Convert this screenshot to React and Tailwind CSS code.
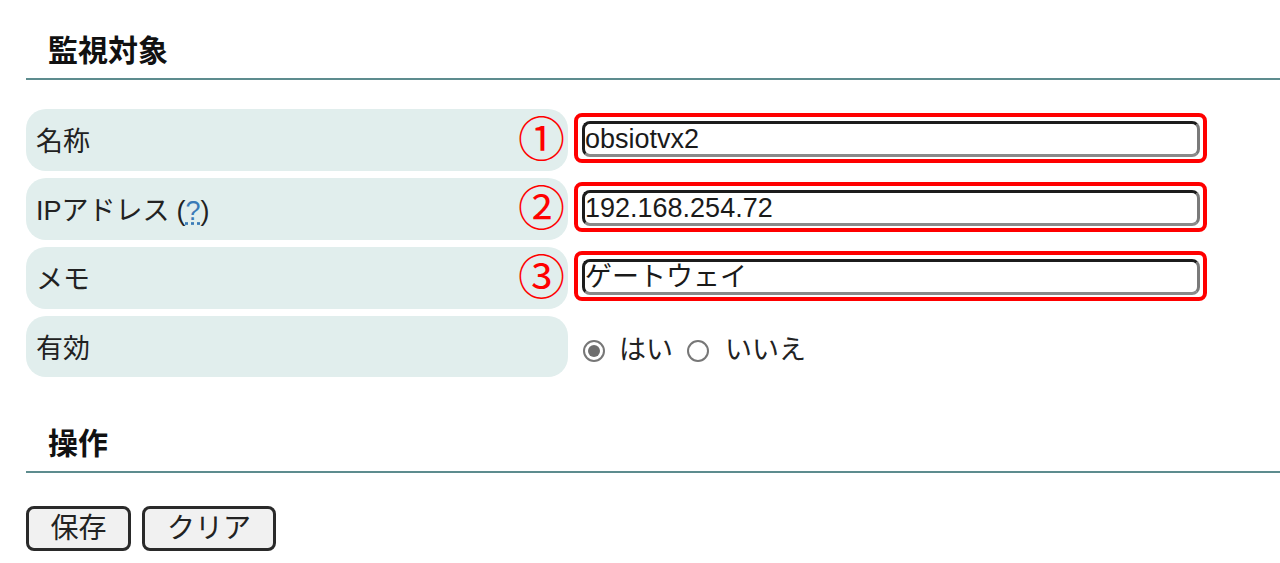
import React, { useState } from "react";

const font = "font-['Liberation_Sans','Noto_Sans_CJK_JP',sans-serif]";

const Field = ({ label, mark, value, help }) => (
  <div className="flex h-[62px]">
    <div className="flex w-[542px] shrink-0 items-center rounded-[20px] bg-[#e1eeed] pl-[10px] pt-[5px] text-[27px] text-[#222]">
      {label}
      {help && (
        <span className="ml-[7px]">
          (<span className="text-[#3a7bb7] underline decoration-dotted">?</span>)
        </span>
      )}
    </div>
    <div className="relative flex items-start pl-[6px] pt-[4px]">
      <span className="absolute left-[-50px] top-[7px] text-[47px] leading-none text-[#ff0000]">{mark}</span>
      <div className="h-[50px] w-[633px] rounded-[8px] border-4 border-[#ff0000] bg-white pb-[2px] pl-[4px] pr-[3px] pt-[4px]">
        <input
          readOnly
          value={value}
          className="h-[36px] w-full rounded-[8px] border-[3px] border-[#1c1c1c] border-b-[#8a8a8a] border-r-[#7a7a7a] bg-white px-0 text-[27px] text-[#1a1a1a] outline-none"
        />
      </div>
    </div>
  </div>
);

const Heading = ({ children }) => (
  <div className="border-b-2 border-[#5d8c8e] pb-[12px] pl-[22px] text-[30px] font-bold leading-none text-[#111]">
    {children}
  </div>
);

export default function App() {
  const [enabled, setEnabled] = useState(true);
  return (
    <div className={`${font} min-h-[563px] bg-white pl-[26px] pt-[36px]`}>
      <Heading>監視対象</Heading>
      <div className="mt-[29px] flex flex-col gap-[7px]">
        <Field label="名称" mark="①" value="obsiotvx2" />
        <Field label="IPアドレス" help mark="②" value="192.168.254.72" />
        <Field label="メモ" mark="③" value="ゲートウェイ" />
        <div className="flex h-[61px]">
          <div className="flex w-[542px] shrink-0 items-center rounded-[20px] bg-[#e1eeed] pl-[10px] pt-[5px] text-[27px] text-[#222]">
            有効
          </div>
          <div className="flex items-center pl-[15px] pt-[8px] text-[27px] text-[#222]">
            <span
              onClick={() => setEnabled(true)}
              className="flex h-[22px] w-[22px] items-center justify-center rounded-full border-2 border-[#777] bg-white"
            >
              {enabled && <span className="h-[12px] w-[12px] rounded-full bg-[#6e6e6e]" />}
            </span>
            <span className="ml-[14px]">はい</span>
            <span
              onClick={() => setEnabled(false)}
              className="ml-[14px] flex h-[22px] w-[22px] items-center justify-center rounded-full border-2 border-[#777] bg-white"
            >
              {!enabled && <span className="h-[12px] w-[12px] rounded-full bg-[#6e6e6e]" />}
            </span>
            <span className="ml-[16px]">いいえ</span>
          </div>
        </div>
      </div>
      <div className="mt-[52px]">
        <Heading>操作</Heading>
      </div>
      <div className="mt-[33px] flex gap-[11px]">
        <button className="h-[45px] w-[105px] rounded-[8px] border-[3px] border-[#2a2a2a] bg-[#f1f1f1] text-[28px] leading-none text-[#222]">
          保存
        </button>
        <button className="h-[45px] w-[134px] rounded-[8px] border-[3px] border-[#2a2a2a] bg-[#f1f1f1] text-[28px] leading-none text-[#222]">
          クリア
        </button>
      </div>
    </div>
  );
}
